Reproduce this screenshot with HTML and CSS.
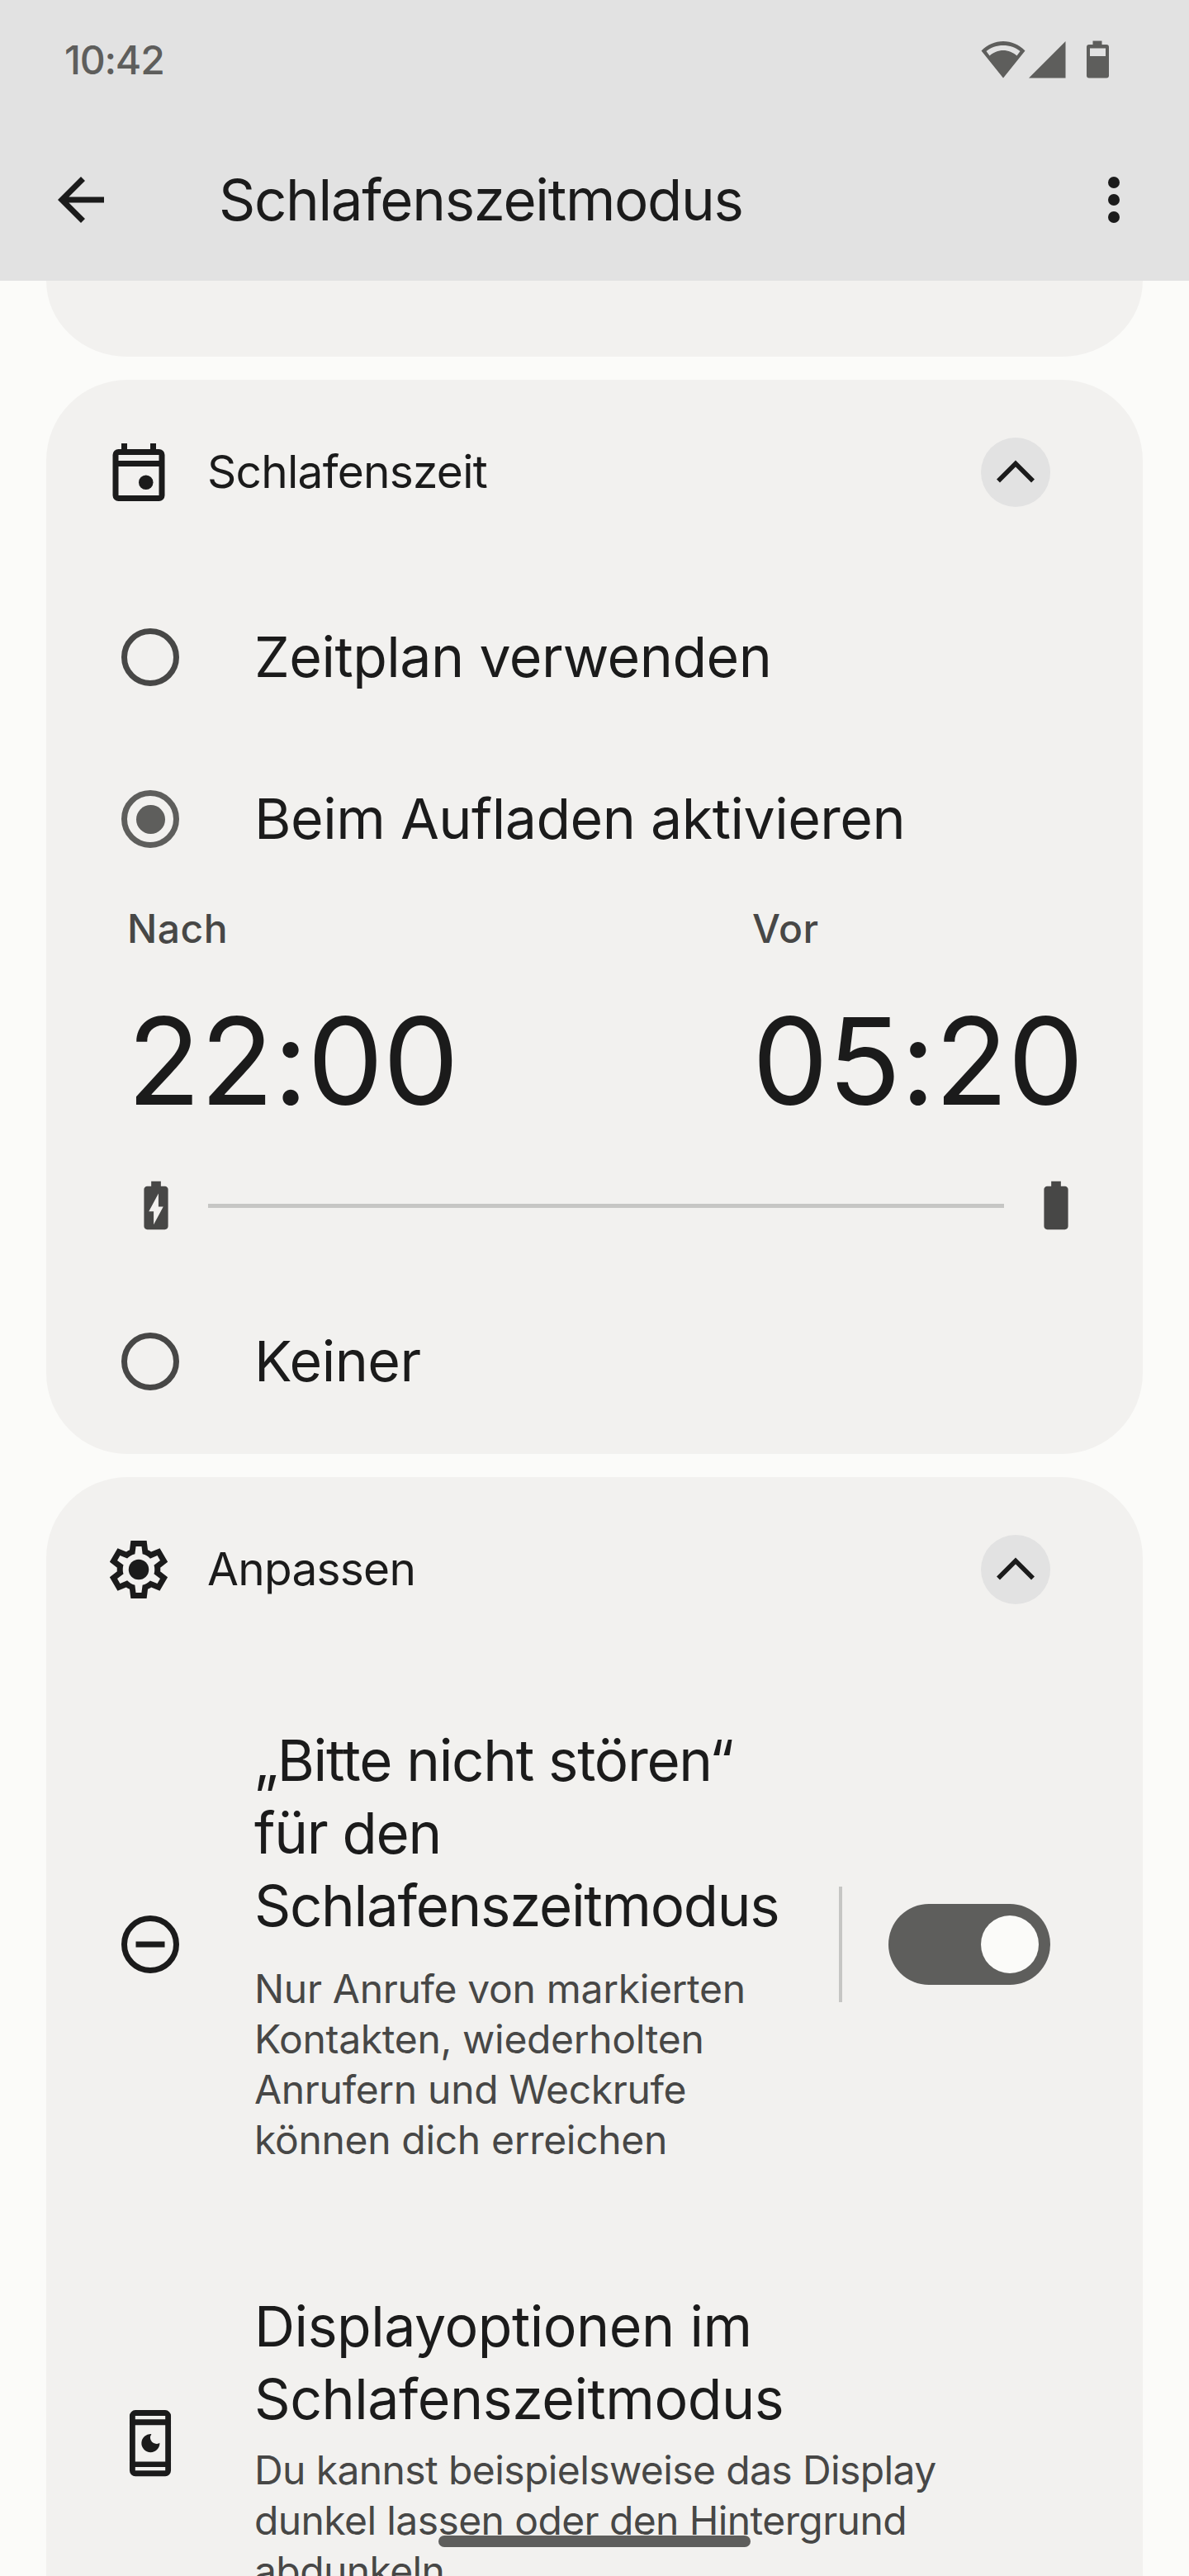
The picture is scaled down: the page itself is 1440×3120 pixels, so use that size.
FILE: index.html
```html
<!DOCTYPE html>
<html lang="de">
<head>
  <meta charset="UTF-8">
  <meta name="viewport" content="width=device-width, initial-scale=1.0">
  <title>Schlafenszeitmodus</title>
  <link rel="stylesheet" href="styles.css">
</head>
<body>
  <div class="top">
    <div class="status-bar">
      <span class="clock">10:42</span>
      <svg class="status-icons" viewBox="0 0 156 48" aria-hidden="true">
        <path fill-rule="evenodd" d="M27 46.500.5 13.500C8 6 17 2 27 2s19 4 26.500 11.500zM10.500 19.500C15 15.500 21 13 27 13s12 2.500 16.500 6.500l4-5.500C42 9.500 35 7 27 7S12 9.500 6.500 14z"/>
        <path d="M102.500 2v44.500H58z"/>
        <path fill-rule="evenodd" d="M135.500 1.500h11V6h5.500a3 3 0 0 1 3 3v34.500a3 3 0 0 1-3 3h-21a3 3 0 0 1-3-3V9a3 3 0 0 1 3-3h4.500zM132 10.500v9.500h19v-9.500z"/>
      </svg>
    </div>
    <header class="app-bar">
      <button class="icon-btn" aria-label="Zurück">
        <svg class="icon" viewBox="0 0 24 24"><path d="M7.825 13l5.600 5.600L12 20l-8-8 8-8 1.425 1.400L7.825 11H20v2z"/></svg>
      </button>
      <h1>Schlafenszeitmodus</h1>
      <button class="icon-btn menu-btn" aria-label="Mehr">
        <svg class="icon" viewBox="0 0 24 24"><circle cx="12" cy="6" r="2"/><circle cx="12" cy="12" r="2"/><circle cx="12" cy="18" r="2"/></svg>
      </button>
    </header>
  </div>

  <main>
    <section class="card card-cut"></section>

    <section class="card">
      <div class="card-header">
        <svg class="icon" viewBox="0 0 24 24"><path fill-rule="evenodd" d="M6 2h2v2h8V2h2v2h1a2 2 0 0 1 2 2v14a2 2 0 0 1-2 2H5a2 2 0 0 1-2-2V6a2 2 0 0 1 2-2h1zM5 6v2h14V6zM5 10v10h14V10z"/><circle cx="14.500" cy="15.500" r="2.500"/></svg>
        <h2>Schlafenszeit</h2>
        <button class="collapse" aria-label="Minimieren">
          <svg viewBox="0 0 24 24"><path d="M6 15l6-6 6 6"/></svg>
        </button>
      </div>

      <div class="option">
        <span class="radio"></span>
        <span class="option-label">Zeitplan verwenden</span>
      </div>
      <div class="option">
        <span class="radio checked"></span>
        <span class="option-label">Beim Aufladen aktivieren</span>
      </div>

      <div class="times">
        <div class="time">
          <div class="time-label">Nach</div>
          <div class="time-value">22:00</div>
        </div>
        <div class="time">
          <div class="time-label">Vor</div>
          <div class="time-value">05:20</div>
        </div>
      </div>
      <div class="range">
        <svg class="battery" viewBox="0 0 24 24"><path fill-rule="evenodd" d="M10 2h4v2h1.670C16.400 4 17 4.600 17 5.330v15.330c0 .740-.600 1.340-1.330 1.340H8.330C7.600 22 7 21.400 7 20.670V5.330C7 4.600 7.600 4 8.330 4H10zM11 20l4-7.500h-2V7l-4 7.500h2z"/></svg>
        <div class="range-line"></div>
        <svg class="battery" viewBox="0 0 24 24"><path d="M10 2h4v2h1.670C16.400 4 17 4.600 17 5.330v15.330c0 .740-.600 1.340-1.330 1.340H8.330C7.600 22 7 21.400 7 20.670V5.330C7 4.600 7.600 4 8.330 4H10z"/></svg>
      </div>

      <div class="option">
        <span class="radio"></span>
        <span class="option-label">Keiner</span>
      </div>
    </section>

    <section class="card">
      <div class="card-header">
        <svg class="icon" viewBox="0 0 24 24"><path fill-rule="evenodd" d="m9.250 22-.4-3.200q-.325-.125-.612-.3-.288-.175-.563-.375L4.700 19.375l-2.750-4.750 2.575-1.950Q4.500 12.500 4.500 12.338v-.675q0-.163.025-.338L1.950 9.375l2.750-4.750 2.975 1.250q.275-.2.575-.375.3-.175.6-.3l.4-3.200h5.500l.4 3.200q.325.125.613.3.287.175.562.375l2.975-1.250 2.750 4.750-2.575 1.950q.025.175.025.338v.674q0 .163-.05.338l2.575 1.950-2.750 4.750-2.950-1.250q-.275.2-.575.375-.3.175-.6.3l-.4 3.200ZM11 20h1.975l.35-2.650q.775-.2 1.438-.588.662-.387 1.212-.937l2.475 1.025.975-1.700-2.150-1.625q.125-.35.175-.738.05-.387.05-.787t-.05-.787q-.05-.388-.175-.738l2.150-1.625-.975-1.700-2.475 1.050q-.55-.575-1.212-.963-.663-.387-1.438-.587L13 4h-1.975l-.35 2.650q-.775.2-1.437.587-.663.388-1.213.938L5.550 7.150l-.975 1.700 2.150 1.600q-.125.375-.175.750-.05.375-.05.8 0 .4.05.775t.175.750l-2.150 1.625.975 1.700 2.475-1.050q.55.575 1.213.963.662.387 1.437.587Z"/><circle cx="12" cy="12" r="3.500"/></svg>
        <h2>Anpassen</h2>
        <button class="collapse" aria-label="Minimieren">
          <svg viewBox="0 0 24 24"><path d="M6 15l6-6 6 6"/></svg>
        </button>
      </div>

      <div class="setting">
        <svg class="icon" viewBox="0 0 24 24"><circle class="line" cx="12" cy="12" r="9"/><path d="M7 11h10v2H7z"/></svg>
        <div class="setting-text narrow">
          <h3 class="tight">„Bitte nicht stören“<br>für den<br>Schlafenszeitmodus</h3>
          <p>Nur Anrufe von markierten<br>Kontakten, wiederholten<br>Anrufern und Weckrufe<br>können dich erreichen</p>
        </div>
        <div class="divider"></div>
        <div class="switch"><span class="thumb"></span></div>
      </div>

      <div class="setting">
        <svg class="icon" viewBox="0 0 24 24"><path fill-rule="evenodd" d="M6.850.6h10.300a2 2 0 0 1 2 2v18.900a2 2 0 0 1-2 2H6.850a2 2 0 0 1-2-2V2.600a2 2 0 0 1 2-2zM6.800 2.600v1.200h10.400V2.600zM6.800 5.800v12.600h10.400V5.800zM6.800 20.300v1.200h10.400v-1.200z"/><path d="M12.400 8.900a3.150 3.150 0 1 0 2.850 3 2.100 2.100 0 0 1-2.850-3z"/></svg>
        <div class="setting-text">
          <h3>Displayoptionen im<br>Schlafenszeitmodus</h3>
          <p class="summary">Du kannst beispielsweise das Display<br>dunkel lassen oder den Hintergrund<br>abdunkeln</p>
        </div>
      </div>
    </section>
  </main>

  <div class="home-bar"></div>
</body>
</html>
```
FILE: styles.css
```css
* {
  box-sizing: border-box;
}
body {
  position: relative;
  margin: 0;
  width: 1440px;
  height: 3120px;
  overflow: hidden;
  background: #fbfbf9;
  color: #1b1b1b;
  font-family: Inter, "Open Sans", sans-serif;
}
h1, h2, h3, p {
  margin: 0;
  font-weight: 400;
}
button {
  border: none;
  padding: 0;
  background: none;
  color: inherit;
}
.icon {
  display: block;
  flex: none;
  width: 84px;
  height: 84px;
  fill: #1b1b1b;
}
.icon .line {
  fill: none;
  stroke: #1b1b1b;
  stroke-width: 2;
}

/* Status bar and app bar */
.top {
  height: 340px;
  background: #e2e2e2;
}
.status-bar {
  display: flex;
  align-items: center;
  justify-content: space-between;
  height: 144px;
  padding: 0 96px 0 78px;
}
.clock {
  font-size: 48px;
  font-weight: 500;
  letter-spacing: -1.2px;
  color: #5e5e5c;
}
.status-icons {
  width: 156px;
  height: 48px;
  fill: #5e5e5c;
}
.app-bar {
  display: flex;
  align-items: center;
  height: 196px;
  padding: 0 49px 0 56px;
}
.app-bar h1 {
  margin-left: 125px;
  font-size: 69px;
  line-height: 84px;
  letter-spacing: -1.35px;
}
.menu-btn {
  margin-left: auto;
}

/* Cards */
main {
  display: flex;
  flex-direction: column;
  gap: 28px;
  margin: 0 56px;
}
.card {
  flex: none;
  padding-bottom: 14px;
  border-radius: 98px;
  background: #f2f1ef;
}
.card-cut {
  height: 92px;
  padding: 0;
  border-radius: 0 0 98px 98px / 0 0 92px 92px;
}
.card-header {
  display: flex;
  align-items: center;
  height: 224px;
  padding: 0 112px 0 70px;
}
.card-header h2 {
  margin-left: 41px;
  padding-bottom: 2px;
  font-size: 55px;
  line-height: 70px;
  letter-spacing: -0.75px;
}
.collapse {
  display: flex;
  align-items: center;
  justify-content: center;
  width: 84px;
  height: 84px;
  margin-left: auto;
  border-radius: 50%;
  background: #e2e2e2;
}
.collapse svg {
  width: 84px;
  height: 84px;
  fill: none;
  stroke: #1b1b1b;
  stroke-width: 1.6;
}

/* Schedule options */
.option {
  display: flex;
  align-items: center;
  height: 196px;
  padding-left: 91px;
}
.card-header + .option {
  margin-top: 14px;
}
.radio {
  display: flex;
  align-items: center;
  justify-content: center;
  width: 70px;
  height: 70px;
  border: 7px solid #474746;
  border-radius: 50%;
}
.radio.checked {
  border-color: #5e5e5c;
}
.radio.checked::after {
  content: "";
  width: 35px;
  height: 35px;
  border-radius: 50%;
  background: #5e5e5c;
}
.option-label {
  margin-left: 91px;
  padding-bottom: 3px;
  font-size: 68px;
  line-height: 88px;
  letter-spacing: -0.48px;
}
.times {
  display: grid;
  grid-template-columns: 757px 1fr;
  padding: 4px 0 0 98px;
}
.time-label {
  font-size: 48px;
  font-weight: 500;
  line-height: 61px;
  letter-spacing: 0.5px;
  color: #474746;
}
.time-value {
  margin-top: 42px;
  font-size: 146px;
  line-height: 176px;
  letter-spacing: -0.6px;
}
.range {
  display: flex;
  align-items: center;
  gap: 28px;
  margin: 52px 70px 56px 98px;
}
.battery {
  flex: none;
  width: 70px;
  height: 70px;
  fill: #474746;
}
.range-line {
  flex: 1;
  height: 5px;
  background: #c6c6c4;
}

/* Settings list */
.setting {
  display: flex;
  align-items: center;
  padding: 75px 112px 76px 84px;
}
.setting-text {
  margin-left: 84px;
  white-space: nowrap;
}
.setting-text.narrow {
  width: 708px;
}
.setting h3 {
  font-size: 68px;
  line-height: 88px;
  letter-spacing: -0.45px;
}
.setting h3.tight {
  font-size: 69px;
  letter-spacing: -1.3px;
}
.setting p {
  margin-top: 12px;
  font-size: 48px;
  line-height: 61px;
  letter-spacing: -0.32px;
  color: #474746;
}
.setting .tight + p {
  margin-top: 26px;
}
.setting .summary {
  letter-spacing: -0.6px;
}
.divider {
  width: 4px;
  height: 140px;
  background: #c6c6c4;
}
.switch {
  display: flex;
  align-items: center;
  justify-content: flex-end;
  width: 196px;
  height: 98px;
  margin-left: auto;
  padding-right: 14px;
  border-radius: 49px;
  background: #5e5e5c;
}
.thumb {
  width: 70px;
  height: 70px;
  border-radius: 50%;
  background: #fbfbf9;
}

/* Gesture handle floats above the content */
.home-bar {
  position: absolute;
  left: 531px;
  bottom: 35px;
  width: 378px;
  height: 14px;
  border-radius: 7px;
  background: #5e5e5c;
}
```
